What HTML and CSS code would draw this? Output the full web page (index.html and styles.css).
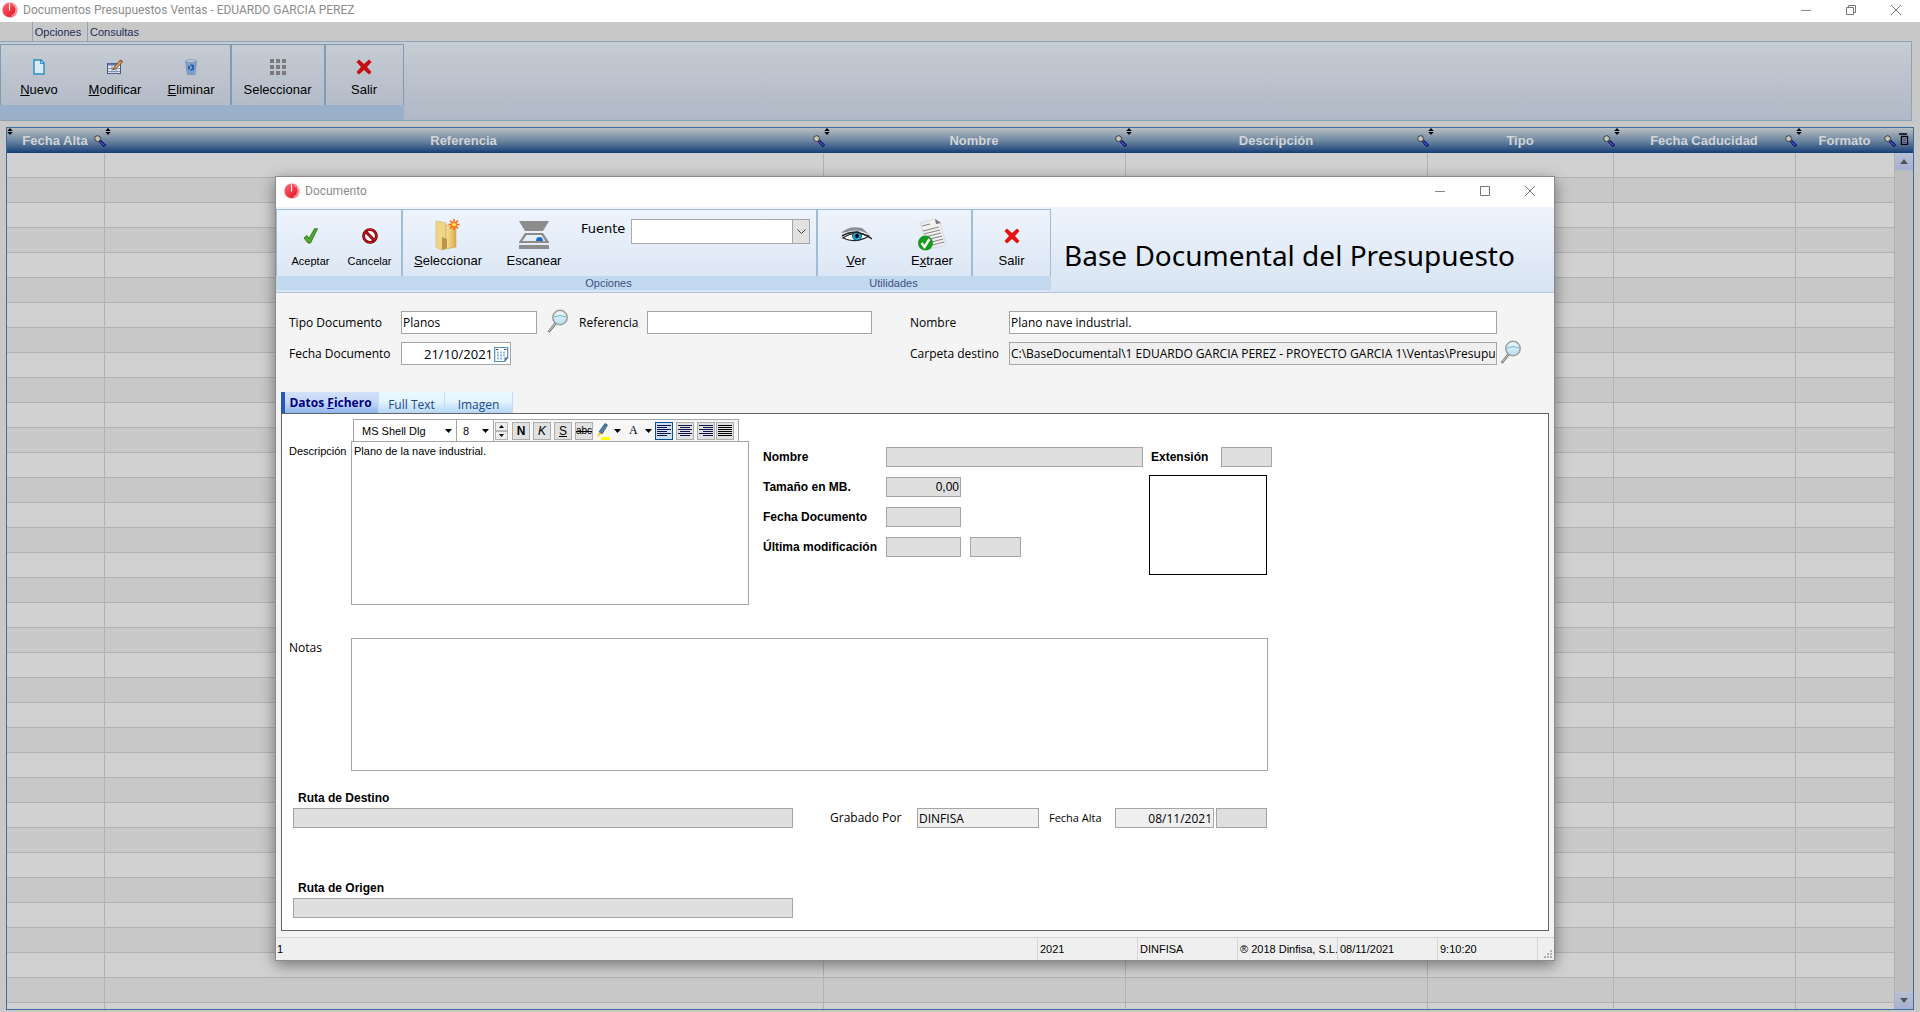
FILE: index.html
```html
<!DOCTYPE html>
<html lang="es">
<head>
<meta charset="utf-8">
<title>Documentos Presupuestos Ventas</title>
<link rel="stylesheet" href="styles.css">
</head>
<body>
<svg class="defs" width="0" height="0" aria-hidden="true">
  <defs>
    <linearGradient id="redball" x1="0" y1="0" x2="1" y2="1"><stop offset="0" stop-color="#ff6a70"/><stop offset="1" stop-color="#e00a1c"/></linearGradient>
    <linearGradient id="folderfill" x1="0" x2="1"><stop offset="0" stop-color="#f7e3a0"/><stop offset="1" stop-color="#d9ab45"/></linearGradient>
    <linearGradient id="headfill" x1="0" y1="0" x2="0" y2="1"><stop offset="0" stop-color="#eef6f8"/><stop offset="1" stop-color="#b5e0f0"/></linearGradient>
  </defs>
  <symbol id="logo" viewBox="0 0 16 16"><circle cx="8" cy="8" r="7.800" fill="#f9a9ae"/><circle cx="7.600" cy="8" r="7" fill="url(#redball)"/><path d="M7.500 1.500v7" stroke="#fff" stroke-width="1.200"/><path d="M10.500 2.500a6 6 0 0 1-1 11.300" fill="none" stroke="#ffd5d8" stroke-width=".9"/></symbol>
  <symbol id="cross" viewBox="0 0 16 16"><path d="M3 0.500 8 5 13 0.500 15.500 3 11 8l4.500 5L13 15.500 8 11 3 15.500 0.500 13 5 8 0.500 3z"/></symbol>
  <symbol id="colsearch" viewBox="0 0 12 12"><path d="M6 6l5 5" stroke="#000" stroke-width="3"/><path d="M6.500 6.500l4 4" stroke="#1717d8" stroke-width="2"/><path d="M6 6.500l4.500 4" stroke="#aab" stroke-width=".6"/><circle cx="3.600" cy="3.600" r="2.900" fill="#c4c4b8" stroke="#222" stroke-width=".8"/></symbol>
  <symbol id="sort" viewBox="0 0 6 7"><path d="M3 0 5.700 3H.3zM3 7 .3 4h5.400z"/></symbol>
  <symbol id="lens" viewBox="0 0 22 24"><path d="M8.500 14.500 1.500 23" stroke="#777" stroke-width="2.600"/><path d="M8.500 14.500 1.500 22.500" stroke="#d6d6d6" stroke-width="1"/><circle cx="13" cy="8.500" r="7.200" fill="url(#headfill)" stroke="#9a9fa3" stroke-width="1.500"/><path d="M7 8q6-3 12 0" stroke="#7fb9d6" fill="none"/></symbol>
  <symbol id="min" viewBox="0 0 10 10"><path d="M0 5.500h10" stroke="#888"/></symbol>
  <symbol id="close" viewBox="0 0 10 10"><path d="M0 0l10 10M10 0L0 10" stroke="#777" stroke-width="1"/></symbol>
</svg>

<div class="app">
  <header class="titlebar">
    <svg class="logo"><use href="#logo"/></svg>
    <span class="titlebar-text">Documentos Presupuestos Ventas - EDUARDO GARCIA PEREZ</span>
    <div class="win-buttons">
      <button aria-label="Minimizar"><svg width="10" height="10"><use href="#min"/></svg></button>
      <button aria-label="Restaurar"><svg width="10" height="10" fill="none" stroke="#777"><path d="M.5 2.500h7v7h-7zM2.500 2.500v-2h7v7h-2"/></svg></button>
      <button aria-label="Cerrar"><svg width="10" height="10"><use href="#close"/></svg></button>
    </div>
  </header>

  <nav class="menu">
    <button class="menu-tab menu-tab-active">Opciones</button>
    <button class="menu-tab">Consultas</button>
  </nav>

  <section class="ribbon ribbon-main">
    <div class="group">
      <div class="group-tools">
        <button class="tool"><svg width="16" height="16" viewBox="0 0 16 16"><path d="M3 1h7l3 3v11H3z" fill="#dbe9f2" stroke="#2a8fc0" stroke-width="1.400"/><path d="M9.500 1v3.500H13" fill="none" stroke="#2a8fc0"/></svg><span><u>N</u>uevo</span></button>
        <button class="tool"><svg width="16" height="16" viewBox="0 0 16 16"><rect x=".5" y="4.500" width="13" height="10" fill="#e4e8f2" stroke="#445a80"/><path d="M1 5.500h9" stroke="#5a7ab0" stroke-width="2"/><path d="M1 9.500h12M1 12.500h12M5 7v8M9 7v8" stroke="#8493ad"/><path d="M6 11l1-3 6.500-7 2 2L9 9.500z" fill="#d8a44c" stroke="#5a4020" stroke-width=".8"/><path d="M12.500 1.500l2 2 1-1.500-1.500-1.500z" fill="#c24040"/></svg><span><u>M</u>odificar</span></button>
        <button class="tool"><svg width="16" height="16" viewBox="0 0 16 16"><path d="M2.500 2h11L12 15.500H4.500z" fill="#7ba2cf" stroke="#8396ad"/><ellipse cx="8" cy="2" rx="5.700" ry="1.300" fill="#c5d2e0" stroke="#73889f" stroke-width=".7"/><circle cx="8" cy="8.500" r="2.300" fill="none" stroke="#1e55a8" stroke-width="1.700" stroke-dasharray="3.500 1.200"/></svg><span><u>E</u>liminar</span></button>
      </div>
      <div class="group-band"></div>
    </div>
    <div class="group">
      <div class="group-tools">
        <button class="tool tool-wide"><svg width="16" height="16" viewBox="0 0 16 16" fill="#7b7b7b"><path d="M0 0h4v4H0zM6 0h4v4H6zM12 0h4v4h-4zM0 6h4v4H0zM6 6h4v4H6zM12 6h4v4h-4zM0 12h4v4H0zM6 12h4v4H6zM12 12h4v4h-4z"/></svg><span>Seleccionar</span></button>
      </div>
      <div class="group-band"></div>
    </div>
    <div class="group group-last">
      <div class="group-tools">
        <button class="tool"><svg width="16" height="16" fill="#c60d12"><use href="#cross"/></svg><span>Salir</span></button>
      </div>
      <div class="group-band"></div>
    </div>
  </section>

  <main class="grid">
    <table class="grid-table">
      <colgroup><col class="c-date"><col class="c-ref"><col class="c-name"><col class="c-desc"><col class="c-type"><col class="c-exp"><col class="c-format"><col class="c-tools"></colgroup>
      <thead>
        <tr>
          <th><svg class="sort"><use href="#sort"/></svg>Fecha Alta<svg class="colsearch"><use href="#colsearch"/></svg></th>
          <th><svg class="sort"><use href="#sort"/></svg>Referencia<svg class="colsearch"><use href="#colsearch"/></svg></th>
          <th><svg class="sort"><use href="#sort"/></svg>Nombre<svg class="colsearch"><use href="#colsearch"/></svg></th>
          <th><svg class="sort"><use href="#sort"/></svg>Descripción<svg class="colsearch"><use href="#colsearch"/></svg></th>
          <th><svg class="sort"><use href="#sort"/></svg>Tipo<svg class="colsearch"><use href="#colsearch"/></svg></th>
          <th><svg class="sort"><use href="#sort"/></svg>Fecha Caducidad<svg class="colsearch"><use href="#colsearch"/></svg></th>
          <th><svg class="sort"><use href="#sort"/></svg>Formato<svg class="colsearch"><use href="#colsearch"/></svg></th>
          <th><svg class="columns" viewBox="0 0 10 12"><path d="M0 1h8M2.500 3.500h6v8h-6z" fill="#8f9cc8" stroke="#000" stroke-width="1.400"/><path d="M4 6h3M4 7.700h3M4 9.500h3" stroke="#223" stroke-width=".8"/></svg></th>
        </tr>
      </thead>
      <tbody>
        <tr><td><td><td><td><td><td><td><td>
        <tr><td><td><td><td><td><td><td><td>
        <tr><td><td><td><td><td><td><td><td>
        <tr><td><td><td><td><td><td><td><td>
        <tr><td><td><td><td><td><td><td><td>
        <tr><td><td><td><td><td><td><td><td>
        <tr><td><td><td><td><td><td><td><td>
        <tr><td><td><td><td><td><td><td><td>
        <tr><td><td><td><td><td><td><td><td>
        <tr><td><td><td><td><td><td><td><td>
        <tr><td><td><td><td><td><td><td><td>
        <tr><td><td><td><td><td><td><td><td>
        <tr><td><td><td><td><td><td><td><td>
        <tr><td><td><td><td><td><td><td><td>
        <tr><td><td><td><td><td><td><td><td>
        <tr><td><td><td><td><td><td><td><td>
        <tr><td><td><td><td><td><td><td><td>
        <tr><td><td><td><td><td><td><td><td>
        <tr><td><td><td><td><td><td><td><td>
        <tr><td><td><td><td><td><td><td><td>
        <tr><td><td><td><td><td><td><td><td>
        <tr><td><td><td><td><td><td><td><td>
        <tr><td><td><td><td><td><td><td><td>
        <tr><td><td><td><td><td><td><td><td>
        <tr><td><td><td><td><td><td><td><td>
        <tr><td><td><td><td><td><td><td><td>
        <tr><td><td><td><td><td><td><td><td>
        <tr><td><td><td><td><td><td><td><td>
        <tr><td><td><td><td><td><td><td><td>
        <tr><td><td><td><td><td><td><td><td>
        <tr><td><td><td><td><td><td><td><td>
        <tr><td><td><td><td><td><td><td><td>
        <tr><td><td><td><td><td><td><td><td>
        <tr><td><td><td><td><td><td><td><td>
        <tr><td><td><td><td><td><td><td><td>
      </tbody>
    </table>
    <div class="scrollbar">
      <button aria-label="Subir"><svg width="8" height="5"><path d="M4 0l4 5H0z" fill="#555"/></svg></button>
      <button aria-label="Bajar"><svg width="8" height="5"><path d="M4 5l4-5H0z" fill="#555"/></svg></button>
    </div>
  </main>
</div>

<div class="dialog" role="dialog" aria-label="Documento">
  <header class="titlebar titlebar-dialog">
    <svg class="logo"><use href="#logo"/></svg>
    <span class="titlebar-text">Documento</span>
    <div class="win-buttons">
      <button aria-label="Minimizar"><svg width="10" height="10"><use href="#min"/></svg></button>
      <button aria-label="Maximizar"><svg width="10" height="10" fill="none" stroke="#777"><path d="M.5.5h9v9h-9z"/></svg></button>
      <button aria-label="Cerrar"><svg width="10" height="10"><use href="#close"/></svg></button>
    </div>
  </header>

  <section class="ribbon ribbon-dialog">
    <div class="group group-accept">
      <div class="group-tools">
        <button class="tool tool-small"><svg width="16" height="16" viewBox="0 0 16 16"><path d="M1 10l3-2.500 2 3L11.500.8h3L7.500 15H5z" fill="#4fae2e" stroke="#2a6e14" stroke-width=".9"/></svg><span>Aceptar</span></button>
        <button class="tool tool-small"><svg width="16" height="16" viewBox="0 0 18 18"><circle cx="9" cy="9" r="7.200" fill="#fff" stroke="#5d0000" stroke-width="3.200"/><circle cx="9" cy="9" r="7.200" fill="none" stroke="#c8141a" stroke-width="1.800"/><path d="M4 4l10 10" stroke="#5d0000" stroke-width="3.400"/><path d="M4 4l10 10" stroke="#c8141a" stroke-width="2"/></svg><span>Cancelar</span></button>
      </div>
      <div class="group-band"></div>
    </div>
    <div class="group group-options">
      <div class="group-tools">
        <button class="tool tool-big"><svg width="32" height="32" viewBox="0 0 32 32"><path d="M4 2l10 2v26l-5 1-5-3z" fill="#f0d488" stroke="#d5b25e" stroke-width=".6"/><path d="M14 6l10 2v20l-10 2z" fill="url(#folderfill)" stroke="#c79d40" stroke-width=".5"/><path d="M10 18l5 2v9l-5 2z" fill="#b99648"/><path d="M22 0v11M16.500 5.500h11M18.100 1.600l7.800 7.800M25.900 1.600l-7.800 7.800" stroke="#ff6a10" stroke-width="1.500"/><circle cx="22" cy="5.500" r="2.500" fill="#ffe04a" stroke="#ff6a10"/></svg><span><u>S</u>eleccionar</span></button>
        <button class="tool tool-big"><svg width="32" height="32" viewBox="0 0 32 32" fill="#8c8c8c"><path d="M1 2h30l-6 10H7z"/><path d="M7 14h18l6 9v1H1v-1zM8.500 16 4.500 22h23l-4-6z" fill-rule="evenodd"/><path d="M1 26h30v4H1z"/><path d="M18 22a3.500 4 0 0 1 7 0z" fill="#1e6fc0"/></svg><span>Escanear</span></button>
        <div class="source">
          <label for="fuente">Fuente</label>
          <div class="select-wrap"><select id="fuente"><option></option></select><span class="select-arrow"><svg width="9" height="6"><path d="M.5.5l4 4 4-4" fill="none" stroke="#444"/></svg></span></div>
        </div>
      </div>
      <div class="group-band">Opciones</div>
    </div>
    <div class="group group-utils">
      <div class="group-tools">
        <button class="tool"><svg width="32" height="32" viewBox="0 0 32 32"><path d="M1 14Q9 6 22 9l8 7Q18 9 7 13z" fill="#8d9196"/><path d="M3 19Q14 11 29 17 16 25 3 19z" fill="#fff" stroke="#222" stroke-width="1.200"/><circle cx="17" cy="17" r="4.500" fill="#1ea0d4" stroke="#123" stroke-width=".7"/><circle cx="17" cy="17" r="1.900" fill="#000"/><path d="M2 17Q16 8 32 20" fill="none" stroke="#222" stroke-width="1.500"/></svg><span><u>V</u>er</span></button>
        <button class="tool"><svg width="32" height="32" viewBox="0 0 32 32"><path d="M4 4l15-4 5 3 6 23-18 4z" fill="#f1f1f1" stroke="#d0d0d0" stroke-width=".7"/><path d="M19 0l1 5 5-1z" fill="#777"/><path d="M6 7l8-2M7 12l16-4M8 15l16-4M9 18l16-4M14 20l12-3M16 23l11-3M17 26l11-3" stroke="#8a8a8a" stroke-width="1.100"/><circle cx="9.500" cy="24" r="7.500" fill="#159a1d"/><path d="M5.500 24l3 4 5-8" fill="none" stroke="#fff" stroke-width="2.400"/></svg><span>E<u>x</u>traer</span></button>
      </div>
      <div class="group-band">Utilidades</div>
    </div>
    <div class="group group-last">
      <div class="group-tools">
        <button class="tool tool-exit"><svg width="16" height="16" fill="#e8110f"><use href="#cross"/></svg><span>Salir</span></button>
      </div>
      <div class="group-band"></div>
    </div>
    <h1>Base Documental del Presupuesto</h1>
  </section>

  <form class="doc-form">
    <label for="tipo" class="col-1">Tipo Documento</label>
    <input id="tipo" class="field" value="Planos">
    <button type="button" class="lens" aria-label="Buscar tipo"><svg width="22" height="24"><use href="#lens"/></svg></button>
    <label for="ref">Referencia</label>
    <input id="ref" class="field">
    <label for="nombre" class="col-7">Nombre</label>
    <input id="nombre" class="field" value="Plano nave industrial.">
    <label for="fecha" class="col-1">Fecha Documento</label>
    <div class="field date-field"><input id="fecha" value="21/10/2021"><svg width="15" height="16" viewBox="0 0 15 16"><path d="M.7 1.500h13v10l-3 4H.7z" fill="#fff" stroke="#4f8fc4" stroke-width="1.200"/><path d="M10.500 15.500v-4h3.500z" fill="#3d6f9e"/><path d="M3 6.500h2M6 6.500h2M9 6.500h2M3 9.500h2M6 9.500h2M9 9.500h2M3 12.500h2M6 12.500h2" stroke="#8fb8e4" stroke-width="2"/><path d="M2 3.500h2.500M10 3.500h2.500" stroke="#555"/></svg></div>
    <label for="carpeta" class="col-7">Carpeta destino</label>
    <input id="carpeta" class="field field-readonly" readonly value="C:\BaseDocumental\1 EDUARDO GARCIA PEREZ - PROYECTO GARCIA 1\Ventas\Presupuestos">
    <button type="button" class="lens lens-end" aria-label="Buscar carpeta"><svg width="22" height="24"><use href="#lens"/></svg></button>
  </form>

  <div class="tabs" role="tablist">
    <button role="tab" class="tab tab-active" aria-selected="true">Datos <u>F</u>ichero</button>
    <button role="tab" class="tab tab-text">Full Text</button>
    <button role="tab" class="tab tab-image">Imagen</button>
  </div>

  <section class="panel">
    <div class="panel-top">
      <label for="desc" class="side-label">Descripción</label>
      <div class="editor">
        <div class="editor-bar">
          <button class="font-name">MS Shell Dlg<svg width="7" height="4"><path d="M0 0h7L3.500 4z"/></svg></button>
          <button class="font-size">8<svg width="7" height="4"><path d="M0 0h7L3.500 4z"/></svg></button>
          <span class="spinner"><button aria-label="Aumentar"><svg width="5" height="3"><path d="M0 3h5L2.500 0z"/></svg></button><button aria-label="Reducir"><svg width="5" height="3"><path d="M0 0h5L2.500 3z"/></svg></button></span>
          <button class="fmt"><b>N</b></button>
          <button class="fmt"><i>K</i></button>
          <button class="fmt"><u>S</u></button>
          <button class="fmt fmt-strike"><s>abc</s></button>
          <button class="pick" aria-label="Resaltar"><svg width="28" height="18" viewBox="0 0 28 18"><path d="M6 15h9v3H6z" fill="#ff0"/><path d="M4 10 10 1.500l2.500 1.500L7 12z" fill="#4a81ab" stroke="#2d4f70" stroke-width=".8"/><path d="M4 10l3 2-5 3z" fill="#f1c840"/><path d="M19 7h7l-3.500 4z"/></svg></button>
          <button class="pick font-color">A<svg width="7" height="4"><path d="M0 0h7L3.500 4z"/></svg></button>
          <button class="fmt align align-active" aria-label="Izquierda"><svg width="14" height="13"><path d="M0 1.500h14M0 3.500h10M0 5.500h14M0 7.500h10M0 9.500h14M0 11.500h10"/></svg></button>
          <button class="fmt align" aria-label="Centro"><svg width="14" height="13"><path d="M0 1.500h14M2 3.500h10M0 5.500h14M2 7.500h10M0 9.500h14M2 11.500h10"/></svg></button>
          <button class="fmt align" aria-label="Derecha"><svg width="14" height="13"><path d="M0 1.500h14M4 3.500h10M0 5.500h14M4 7.500h10M0 9.500h14M4 11.500h10"/></svg></button>
          <button class="fmt align align-full" aria-label="Justificar"><svg width="14" height="13"><path d="M0 1.500h14M0 3.500h14M0 5.500h14M0 7.500h14M0 9.500h14M0 11.500h14"/></svg></button>
        </div>
        <textarea id="desc" class="desc">Plano de la nave industrial.</textarea>
      </div>
      <div class="file-info">
        <div class="info-row"><label for="f-nombre">Nombre</label><input id="f-nombre" class="gray w-name" readonly></div>
        <div class="info-row"><label for="f-size">Tamaño en MB.</label><input id="f-size" class="gray w-size" readonly value="0,00"></div>
        <div class="info-row"><label for="f-date">Fecha Documento</label><input id="f-date" class="gray w-size" readonly></div>
        <div class="info-row"><label for="f-mod">Última modificación</label><input id="f-mod" class="gray w-size" readonly><input class="gray w-time" aria-label="Hora de modificación" readonly></div>
      </div>
      <div class="file-side">
        <div class="info-row ext-row"><label for="f-ext">Extensión</label><input id="f-ext" class="gray w-time" readonly></div>
        <div class="preview"></div>
      </div>
    </div>

    <div class="panel-notes">
      <label for="notas" class="side-label">Notas</label>
      <textarea id="notas" class="notes"></textarea>
    </div>

    <div class="panel-paths">
      <div class="path">
        <label for="destino">Ruta de Destino</label>
        <input id="destino" class="gray" readonly>
      </div>
      <div class="saved">
        <label for="grabado" class="w-saved">Grabado Por</label>
        <input id="grabado" class="gray gray-light w-user" readonly value="DINFISA">
        <label for="alta" class="w-alta">Fecha Alta</label>
        <input id="alta" class="gray gray-light w-date" readonly value="08/11/2021">
        <input class="gray w-time" aria-label="Hora de alta" readonly>
      </div>
    </div>
    <div class="panel-paths">
      <div class="path">
        <label for="origen">Ruta de Origen</label>
        <input id="origen" class="gray" readonly>
      </div>
    </div>
  </section>

  <footer class="status">
    <span class="status-main">1</span>
    <span>2021</span>
    <span>DINFISA</span>
    <span>® 2018 Dinfisa, S.L.</span>
    <span>08/11/2021</span>
    <span>9:10:20</span>
    <span class="status-grip"><svg width="8" height="8" fill="#b0b0b0"><path d="M6 0h2v2H6zM3 3h2v2H3zM6 3h2v2H6zM0 6h2v2H0zM3 6h2v2H3zM6 6h2v2H6z"/></svg></span>
  </footer>
</div>
</body>
</html>
```
FILE: styles.css
```css
* { box-sizing: border-box; }

body {
  margin: 0;
  font-family: "Liberation Sans", Arial, sans-serif;
  font-size: 11px;
  color: #000;
  background: #c8c8c8;
}

button {
  margin: 0;
  padding: 0;
  border: 0;
  background: none;
  font: inherit;
  color: inherit;
}

input, textarea, select { font: inherit; color: inherit; border-radius: 0; outline: 0; }
.defs { position: absolute; }

.app {
  display: flex;
  flex-direction: column;
  height: 100vh;
  overflow: hidden;
}

/* Title bars */
.titlebar {
  display: flex;
  align-items: center;
  flex: none;
  height: 22px;
  padding: 0 2px 2px 2px;
  background: #fff;
  color: #8c8c8c;
  font-family: Roboto, sans-serif;
  font-size: 12px;
}
.titlebar-dialog { height: 30px; padding-left: 8px; }
.logo { width: 16px; height: 16px; margin-right: 5px; }
.win-buttons { display: flex; margin-left: auto; }
.win-buttons button { display: flex; align-items: center; justify-content: center; width: 45px; height: 20px; }

/* Menu */
.menu {
  display: flex;
  flex: none;
  height: 19px;
  margin-right: 8px;
  padding-left: 32px;
  color: #1f2c5a;
}
.menu-tab { padding: 0 2px; height: 19px; }
.menu-tab-active { width: 56px; padding: 0 5px 0 1px; border: solid #8fa3b8; border-width: 0 1px; }

/* Ribbons */
.ribbon { display: flex; flex: none; }
.ribbon-main {
  height: 80px;
  margin-right: 8px;
  padding-top: 2px;
  border: 1px solid #8fa3b8;
  border-left: 0;
  background: linear-gradient(#c6ccd3, #b0b8c6);
}
.ribbon-main .group-tools { height: 61px; border-color: #7f9bb6; padding-right: 1px; }
.ribbon-main .group-band { height: 15px; background: #9ab0c8; }
.ribbon-dialog {
  height: 86px;
  padding-top: 2px;
  border-bottom: 1px solid #b3c6de;
  background: linear-gradient(#eef4fd, #d8e4f2);
}
.group-tools {
  display: flex;
  height: 67px;
  border: solid #9fbdd6;
  border-width: 1px 0 0 2px;
}
.group:first-child .group-tools { border-left-width: 1px; }
.group-last .group-tools { border-right-width: 1px; }
.group-band {
  height: 14px;
  background: #c1d8ef;
  color: #3c5280;
  line-height: 14px;
  text-align: center;
}
.tool {
  display: flex;
  flex-direction: column;
  align-items: center;
  justify-content: flex-end;
  gap: 7px;
  width: 76px;
  padding-bottom: 8px;
  font-size: 13px;
  line-height: 15px;
}
.tool-wide { width: 91px; }
.ribbon-dialog .tool { gap: 2px; }
.ribbon-dialog .tool-small { width: 59px; gap: 10px; font-size: 11px; padding-bottom: 7px; }
.ribbon-dialog .tool-big { width: 86px; }
.ribbon-dialog .tool-exit { width: 77px; gap: 9px; }
.group-accept { width: 125px; }
.group-accept .group-tools { padding-left: 4px; }
.group-options { flex: 0 1 415px; }
.group-options .group-tools { padding-left: 2px; }
.group-utils { width: 155px; }
.source {
  display: flex;
  align-items: flex-start;
  gap: 6px;
  padding: 9px 6px 0 4px;
  flex: 1;
  font-family: "DejaVu Sans", sans-serif;
  font-size: 13px;
}
.source label { line-height: 20px; }
.select-wrap { display: flex; flex: 1; position: relative; }
.select-wrap select { appearance: none; width: 100%; height: 25px; border: 1px solid #aaa; background: #fff; }
.select-arrow {
  position: absolute;
  right: 0;
  top: 0;
  display: flex;
  align-items: center;
  justify-content: center;
  width: 18px;
  height: 25px;
  border: 1px solid #a6a6a6;
  background: #e1e1e1;
  pointer-events: none;
}
h1 {
  margin: 0 0 0 13px;
  padding-top: 26px;
  font-family: "Noto Sans", sans-serif;
  font-size: 28px;
  font-weight: 400;
  line-height: 40px;
  white-space: nowrap;
}

/* Background document grid */
.grid {
  position: relative;
  flex: 1;
  min-height: 0;
  margin: 6px 6px 2px 6px;
  border: 1px solid #3d6c9f;
  overflow: hidden;
}
.grid-table { width: 100%; table-layout: fixed; border-collapse: separate; border-spacing: 0; }
.c-date { width: 98px; }
.c-ref { width: 719px; }
.c-name { width: 302px; }
.c-desc { width: 302px; }
.c-type { width: 186px; }
.c-exp { width: 182px; }
.c-format { width: 99px; }
.c-tools { width: 18px; }
.grid-table thead { background: linear-gradient(#b9bfc2, #6e87a1 50%, #163f78); }
.grid-table th {
  position: relative;
  height: 25px;
  padding: 0 2px 0 0;
  color: #d2d4d6;
  font-size: 13px;
  line-height: 25px;
}
.grid-table td { height: 25px; padding: 0; border: solid #b2b2b2; border-width: 0 1px 1px 0; }
.grid-table tr:nth-child(odd) td { background: #d1d1d1; }
.grid-table tr:nth-child(even) td { background: #c8c8c8; }
.sort { position: absolute; left: 0; top: 0; width: 6px; height: 7px; }
.colsearch { position: absolute; right: -1px; top: 7px; width: 12px; height: 12px; }
.columns { position: absolute; left: 4px; top: 5px; width: 10px; height: 12px; }
.scrollbar {
  position: absolute;
  top: 25px;
  right: 0;
  bottom: 0;
  display: flex;
  flex-direction: column;
  justify-content: space-between;
  width: 18px;
  background: #bebebe;
}
.scrollbar button { display: flex; align-items: center; justify-content: center; height: 17px; background: linear-gradient(#b9c1d6, #a4b0d0); }

/* Dialog window */
.dialog {
  position: absolute;
  left: 275px;
  right: 365px;
  top: 176px;
  display: flex;
  flex-direction: column;
  border: 1px solid #8b8b8b;
  background: #f4f4f4;
  box-shadow: 0 4px 14px rgba(0, 0, 0, .45);
}

.doc-form {
  display: grid;
  grid-template-columns: 112px 136px 42px 68px 225px 38px 99px 1fr 57px;
  grid-auto-rows: 23px;
  row-gap: 8px;
  align-items: center;
  padding: 18px 0 27px 13px;
  font-family: "Open Sans", sans-serif;
  font-size: 12px;
}
.col-1 { grid-column: 1; }
.col-7 { grid-column: 7; }
.field {
  width: 100%;
  height: 23px;
  padding: 0 1px;
  border: 1px solid #a5a5a5;
  background: #fff;
}
.field-readonly { background: #efefef; }
.date-field { display: flex; align-items: center; width: 110px; }
.date-field input { width: 91px; padding: 0 1px; border: 0; background: none; font-size: 13px; text-align: right; }
.lens { display: flex; justify-self: start; margin: 0 0 4px 10px; }
.lens-end { margin-left: 3px; }

.tabs { display: flex; height: 21px; padding-left: 5px; font-family: "Open Sans", sans-serif; font-size: 12px; }
.tab { border-right: 1px solid #c5dcf5; background: linear-gradient(#e9faff, #e3f4ff 45%, #b5d6f8); color: #1b4a8c; }
.tab-active {
  width: 98px;
  padding-right: 2px;
  border-left: 4px solid #2758b8;
  background: linear-gradient(#d3e2fa, #c3d7f7 50%, #8fb5ec);
  color: #00007c;
  font-weight: 700;
}
.tab-text { width: 66px; padding-top: 4px; }
.tab-image { width: 68px; padding-top: 4px; }

.panel {
  margin: 0 5px;
  height: 518px;
  padding: 5px 0 0 7px;
  border: 1px solid #636363;
  background: #fff;
}
.panel-top { display: flex; }
.side-label { flex: none; width: 62px; }
.panel-top .side-label { padding-top: 25px; line-height: 14px; }
.editor { width: 398px; }
.editor-bar {
  display: flex;
  align-items: center;
  width: 386px;
  height: 22px;
  margin-left: 2px;
  border: 1px solid #a5a5a5;
  border-bottom: 0;
  background: #f7f7f7;
}
.font-name, .font-size { display: flex; align-items: center; justify-content: space-between; height: 21px; background: #fff; border-right: 1px solid #a5a5a5; }
.font-name { width: 103px; padding: 0 4px 0 8px; }
.font-size { width: 37px; padding: 0 4px 0 6px; }
.spinner { display: flex; flex-direction: column; width: 13px; margin: 0 4px 0 1px; }
.spinner button { display: flex; align-items: center; justify-content: center; height: 9px; border: 1px solid #b5b5b5; background: #eee; }
.fmt { display: flex; align-items: center; justify-content: center; width: 18px; height: 18px; margin-right: 3px; border: 1px solid #adadad; background: #e1e1e1; font-size: 12px; }
.fmt-strike { margin-right: 2px; font-size: 10px; }
.pick { display: flex; align-items: center; width: 30px; height: 18px; }
.font-color { gap: 7px; padding-left: 4px; font-family: "Liberation Serif", serif; font-size: 12px; }
.align svg { stroke: #10104c; stroke-width: 1px; }
.align-active { border-color: #0a4f8f; background: #cce0f4; }
.align-full { margin-left: -2px; margin-right: 0; }
.align-full svg { stroke: #000; }
textarea {
  display: block;
  resize: none;
  padding: 2px;
  border: 1px solid #a5a5a5;
  background: #fff;
  line-height: 14px;
}
.desc { width: 398px; height: 164px; }

.file-info { display: flex; flex-direction: column; gap: 10px; width: 380px; margin-left: 14px; padding-top: 28px; }
.info-row { display: flex; align-items: center; height: 20px; font-size: 12px; }
.info-row label { width: 123px; font-weight: 700; }
.gray { height: 20px; padding: 0 1px; border: 1px solid #a5a5a5; background: #dfdfdf; }
.gray-light { background: #efefef; }
.w-name { width: 257px; }
.w-size { width: 75px; margin-right: 9px; text-align: right; }
.w-time { width: 51px; }
.file-side { margin-left: 6px; padding-top: 28px; }
.ext-row label { width: 72px; padding-left: 2px; }
.preview { width: 118px; height: 100px; margin-top: 8px; border: 1px solid #000; background: #fff; }

.panel-notes { display: flex; margin-top: 33px; }
.panel-notes .side-label { padding-top: 1px; font-family: "Open Sans", sans-serif; font-size: 12px; }
.notes { width: 917px; height: 133px; }

.panel-paths { display: flex; margin: 20px 0 53px 4px; font-size: 12px; }
.path { display: flex; flex-direction: column; width: 500px; }
.path label { height: 17px; padding-left: 5px; font-weight: 700; }
.saved { display: flex; align-items: flex-end; margin-left: 37px; font-family: "Open Sans", sans-serif; }
.saved label { line-height: 20px; }
.w-saved { width: 87px; }
.w-user { width: 122px; margin-right: 10px; }
.w-alta { width: 66px; font-size: 11px; }
.w-date { width: 99px; margin-right: 2px; text-align: right; }

.status {
  display: flex;
  height: 23px;
  margin-top: 6px;
  border-top: 1px solid #d5d5d5;
  background: #efefef;
  font-size: 11px;
  line-height: 23px;
}
.status span { flex: none; width: 100px; padding-left: 2px; border-left: 1px solid #d5d5d5; white-space: nowrap; }
.status .status-main { flex: 1; padding-left: 1px; border: 0; }
.status .status-grip { display: flex; align-items: flex-end; justify-content: flex-end; width: 17px; padding: 0 2px 2px 0; }
```
